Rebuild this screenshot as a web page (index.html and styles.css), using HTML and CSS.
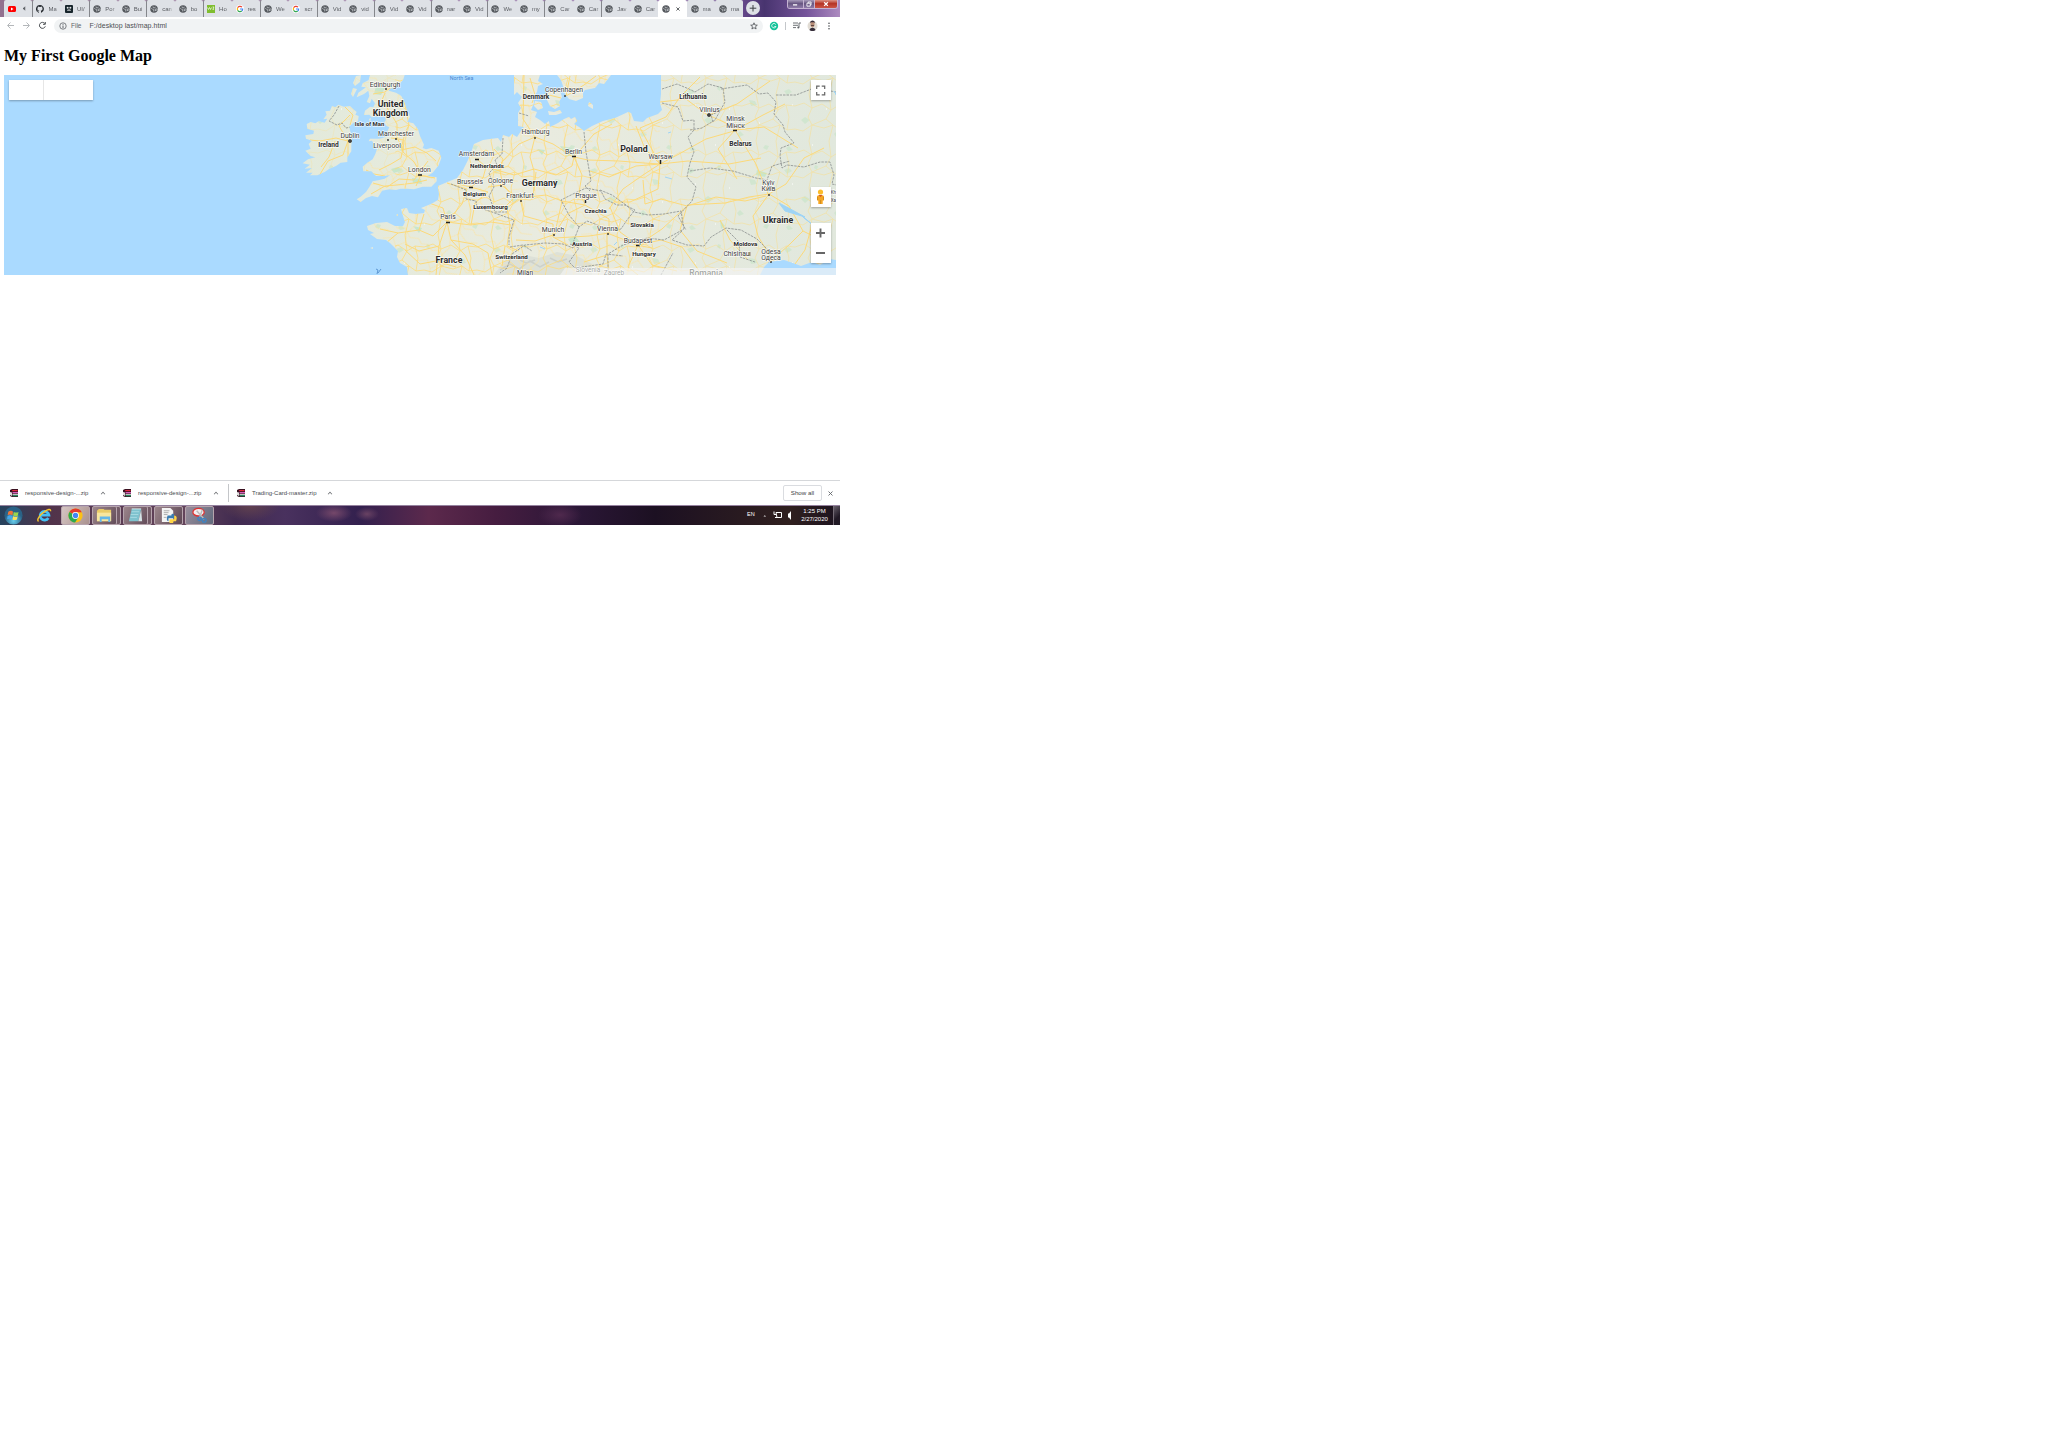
FILE: index.html
```html
<!DOCTYPE html>
<html lang="en">
<head>
<meta charset="utf-8">
<title>My First Google Map</title>
<link rel="stylesheet" href="styles.css">
</head>
<body>
<svg class="defs" width="0" height="0" aria-hidden="true">
  <symbol id="globe" viewBox="0 0 16 16"><circle cx="8" cy="8" r="7.500" fill="#54585d"/><path d="M2 5.500l3.500 3.500 2 .5v3.500M6 3l.5 2.500L9 6l2-2.500M10 9l3-1.500 1 1.500-3 3z" fill="none" stroke="#dfe2e7" stroke-width="1.300"/></symbol>
  <symbol id="google" viewBox="0 0 16 16"><circle cx="8" cy="8" r="8" fill="#fff"/><g fill="none" stroke-width="2.400"><path d="M12 4.300A5.400 5.400 0 0 0 3.300 5.600" stroke="#ea4335"/><path d="M3.300 5.600a5.400 5.400 0 0 0 0 4.800" stroke="#fbbc05"/><path d="M3.300 10.400a5.400 5.400 0 0 0 8.200 1.700" stroke="#34a853"/><path d="M11.500 12.100A5.400 5.400 0 0 0 13.300 8H8" stroke="#4285f4"/></g></symbol>
  <symbol id="zip" viewBox="0 0 9 9"><path d="M0 1l2-1h6v8H2L0 7z" fill="#3a1020"/><path d="M0 3l2 .6V7L0 6z" fill="#ddd"/><path d="M2.200 1.600h5.400" stroke="#e0263c" stroke-width="1.200"/><path d="M2.500 3.600H8" stroke="#d65cc0" stroke-width="1.200"/><path d="M2.500 5.300H8" stroke="#fff" stroke-width=".9"/><path d="M2.500 6.700H8" stroke="#25a36d" stroke-width="1.100"/></symbol>
</svg>

<main class="screen">
  <header class="tabstrip">
    <div class="tab"><svg class="fav" viewBox="0 0 16 16"><rect y="2" width="16" height="12" rx="3" fill="#f00"/><path d="M6 5l5 3-5 3z" fill="#fff"/></svg><svg class="speaker" viewBox="0 0 4 6"><path d="M0 2h1l2-2v6L1 4H0z" fill="#5f6368"/></svg></div>
    <div class="tab sep"><svg class="fav" viewBox="0 0 16 16"><path fill="#24292e" d="M8 0a8 8 0 0 0-2.500 15.600c.4 0 .5-.2.5-.4v-1.500c-2.200.5-2.700-1-2.700-1-.4-.9-.9-1.200-.9-1.200-.7-.5.1-.5.1-.5.8.1 1.200.8 1.200.8.7 1.300 1.900.9 2.300.7.1-.5.3-.9.500-1.100-1.800-.2-3.600-.9-3.600-4 0-.9.3-1.600.8-2.200 0-.2-.3-1 .1-2.100 0 0 .7-.2 2.200.8a8 8 0 0 1 4 0c1.500-1 2.200-.8 2.200-.8.4 1.100.1 1.900.1 2.100.5.600.8 1.300.8 2.200 0 3.100-1.900 3.800-3.700 4 .3.3.6.8.6 1.500v2.200c0 .2.1.5.5.4A8 8 0 0 0 8 0z"/></svg><span>Ma</span></div>
    <div class="tab"><svg class="fav" viewBox="0 0 16 16"><rect width="16" height="16" rx="2" fill="#17252c"/><path d="M4 4.500h2.500v2H4zM9.500 4.500H12v2H9.500zM4 11c2-2 6-2 8 0" fill="#fff" stroke="#fff"/></svg><span>UI/</span></div>
    <div class="tab sep"><svg class="fav"><use href="#globe"/></svg><span>Por</span></div>
    <div class="tab"><svg class="fav"><use href="#globe"/></svg><span>Bui</span></div>
    <div class="tab sep"><svg class="fav"><use href="#globe"/></svg><span>can</span></div>
    <div class="tab"><svg class="fav"><use href="#globe"/></svg><span>bo</span></div>
    <div class="tab sep"><svg class="fav" viewBox="0 0 16 16"><path d="M0 0h16v16H0z" fill="#7fbd2f"/><path d="M1 5l2 4 2-4 2 4 2-4M11 4h3l-2 3c3 0 2 3-1 2" fill="none" stroke="#fff" stroke-width="1.300"/></svg><span>Ho</span></div>
    <div class="tab"><svg class="fav"><use href="#google"/></svg><span>res</span></div>
    <div class="tab sep"><svg class="fav"><use href="#globe"/></svg><span>We</span></div>
    <div class="tab"><svg class="fav"><use href="#google"/></svg><span>scr</span></div>
    <div class="tab sep"><svg class="fav"><use href="#globe"/></svg><span>Vid</span></div>
    <div class="tab"><svg class="fav"><use href="#globe"/></svg><span>vid</span></div>
    <div class="tab sep"><svg class="fav"><use href="#globe"/></svg><span>Vid</span></div>
    <div class="tab"><svg class="fav"><use href="#globe"/></svg><span>Vid</span></div>
    <div class="tab sep"><svg class="fav"><use href="#globe"/></svg><span>nar</span></div>
    <div class="tab"><svg class="fav"><use href="#globe"/></svg><span>Vid</span></div>
    <div class="tab sep"><svg class="fav"><use href="#globe"/></svg><span>We</span></div>
    <div class="tab"><svg class="fav"><use href="#globe"/></svg><span>my</span></div>
    <div class="tab sep"><svg class="fav"><use href="#globe"/></svg><span>Car</span></div>
    <div class="tab"><svg class="fav"><use href="#globe"/></svg><span>Car</span></div>
    <div class="tab sep"><svg class="fav"><use href="#globe"/></svg><span>Jav</span></div>
    <div class="tab"><svg class="fav"><use href="#globe"/></svg><span>Car</span></div>
    <div class="tab active"><svg class="fav"><use href="#globe"/></svg><svg class="x" viewBox="0 0 5 5"><path d="M.5.5l4 4M4.500.5l-4 4" stroke="#3c4043"/></svg></div>
    <div class="tab"><svg class="fav"><use href="#globe"/></svg><span>ma</span></div>
    <div class="tab"><svg class="fav"><use href="#globe"/></svg><span>ma</span></div>
    <div class="newtab"><svg viewBox="0 0 14 14"><path d="M7 4v6.500M3.700 7.200h6.600" stroke="#3c4043" stroke-width="1"/></svg></div>
    <div class="winctl">
      <i><svg viewBox="0 0 18 9"><path d="M6 5h5" stroke="#fff" stroke-width="1.600"/></svg></i>
      <i><svg viewBox="0 0 12 9"><path d="M3.500 3h4v3.500h-4zM5 3V1.500h3.500V5H7.500" fill="none" stroke="#fff"/></svg></i>
      <i class="close"><svg viewBox="0 0 24 9"><path d="M10 2l4 4M14 2l-4 4" stroke="#fff" stroke-width="1.400"/></svg></i>
    </div>
  </header>

  <nav class="toolbar">
    <svg class="navs" viewBox="0 0 54 18" fill="none"><path d="M14 8.500H8M10.500 5.500l-3 3 3 3M23 8.500h6M26.500 5.500l3 3-3 3" stroke="#b4b7ba"/><path d="M44.800 6.500a3 3 0 1 0 .5 2.800M45.300 5v2.300H43" stroke="#4b4f53" stroke-width="1"/></svg>
    <div class="omnibox">
      <svg class="info" viewBox="0 0 8 8"><circle cx="4" cy="4" r="3.200" fill="none" stroke="#5f6368" stroke-width=".8"/><path d="M4 1.900v.9M4 3.500v2.600" stroke="#5f6368"/></svg>
      <span class="file">File</span><span class="url">F:/desktop last/map.html</span>
      <svg class="star" viewBox="0 0 8 8"><path d="M4 .8l.9 2.200 2.400.2-1.800 1.500.6 2.300L4 5.700 1.900 7l.6-2.300L.7 3.200l2.400-.2z" fill="none" stroke="#4b4f53" stroke-width=".8"/></svg>
    </div>
    <svg class="ext" viewBox="763 17 77 18" fill="none"><circle cx="774" cy="26" r="4.200" fill="#15c39a"/><path d="M775.800 24.500a2.200 2.200 0 1 0 .2 2h-1.700" stroke="#fff" stroke-width=".8"/><path d="M785.500 22v8" stroke="#c4c7ca"/><path d="M793 23h5M793 25.300h5M793 27.600h3M801 23h-2v4.500" stroke="#5f6368" stroke-width=".9"/><circle cx="798.300" cy="27.500" r="1" fill="#5f6368"/><circle cx="812.500" cy="26" r="5" fill="#e1dcd4"/><path d="M810.500 22.500c0-2 4-2 4 0v3c-1 2.500-3 2.500-4 0z" fill="#b98e78"/><path d="M810 23c0-3.500 5-3.500 5 0l-1-.8h-3zM809.500 30c1-3 5-3 6 0-1 1.300-5 1.300-6 0z" fill="#342c38"/><path d="M811 25.500h3" stroke="#3a2a2a" stroke-width=".7"/><g fill="#4b4f53"><circle cx="829" cy="23.200" r=".8"/><circle cx="829" cy="26" r=".8"/><circle cx="829" cy="28.800" r=".8"/></g></svg>
  </nav>

  <section class="page">
    <h1>My First Google Map</h1>
    <div class="map">
      <svg class="geo" viewBox="4 75 832 200">
        <defs>
          <pattern id="minor" width="53" height="47" patternUnits="userSpaceOnUse"><path d="M0 12l9-3 8 5 10-4 9 6 8-5 9 1M0 35l8 2 9-6 12 3 9-3 7 5 8-1M14 0l3 14-4 9 4 8-3 16M34 0l2 16-5 9 7 6-4 16M17 31l14-6M44 11l3 12-2 13" fill="none" stroke="#fddb78" stroke-width=".75"/></pattern>
          <pattern id="fine" width="41" height="37" patternUnits="userSpaceOnUse" patternTransform="rotate(33)"><path d="M0 9l7 3 6-5 9 6 8-4 5 3 6-3M20 0l-3 11 4 8-6 9 5 9M21 19l10 4 10-5M0 28l8-6 7 6" fill="none" stroke="#fde39a" stroke-width=".6"/></pattern>
          <pattern id="green" width="97" height="79" patternUnits="userSpaceOnUse"><path d="M8 12l5-2 3 3-5 3zM39 7l3 1-1 4-3-2zM70 21l6 1 2 4-6 1zM25 41l4-3 5 3-5 4zM58 55l3-3 4 4-5 2zM86 66l4 1-2 4-4-2zM10 69l3-2 4 4-5 1z" fill="#cbe6cb" opacity=".7"/><path d="M50 30h1M16 26h1M80 44h1M36 66h1" stroke="#fff"/></pattern>
          <clipPath id="land">
            <path d="M408 275L407 267 400 263 397 257 398 251 390 243 386 240 377 239 370 234 374 233 368 230 367 226 376 223 387 222 395 226 403 226 405 222 403 216 401 209 407 208 409 213 416 214 424 213 425 210 421 208 431 204 438 200 439 194 438 186 445 183 457 178 463 170 468 160 472 150 474 144 483 140 490 139 498 138 501 142 503 135 509 137 512 134 517 137 521 131 524 127 518 126 518 113 521 108 518 103 522 97 517 92 514 95V75H540L538 81 543 84 538 86 537 92 533 97 534 103 531 110 537 112 535 117 540 120 545 124 549 121 550 127 558 123 564 119 569 117 571 119 575 117 577 121 574 124 579 127 584 131 592 126 603 121 615 118 628 112 631 113 634 121 643 122 647 118 658 114 662 110 660 103 661 94 661 75H836V260L830 259 820 265 812 262 801 266 793 263 784 260 776 261 769 262 764 267 760 275Z"/>
            <path transform="translate(290 70) scale(.33333)" d="M225 15L240 15 236 30 218 40 214 50 228 52 205 68 200 82 222 72 235 62 238 78 230 96 240 100 245 86 255 100 250 112 240 110 225 122 222 135 238 134 246 142 262 138 285 140 288 150 282 158 290 168 298 172 292 184 296 196 284 202 270 206 240 206 236 214 246 212 252 222 250 232 262 234 256 252 248 268 232 278 218 290 220 304 244 304 258 318 278 318 300 316 284 326 268 330 248 334 240 348 228 366 212 380 200 388 212 396 228 384 246 378 264 382 276 362 298 358 318 360 332 356 352 356 372 358 398 350 424 350 440 334 440 322 412 318 428 308 446 286 454 264 446 242 424 234 408 238 398 234 402 224 390 198 384 178 370 160 352 156 360 140 350 120 344 98 334 78 318 68 296 62 300 56 316 50 328 44 340 28 344 15Z"/>
            <path transform="translate(290 70) scale(.33333)" d="M145 104L162 110 180 108 190 118 200 126 196 134 206 138 204 154 190 158 178 170 182 190 186 204 184 226 184 244 172 262 172 276 152 278 138 288 118 296 104 306 82 316 60 316 68 308 48 308 66 294 44 296 60 284 38 280 54 268 76 262 62 258 46 242 62 236 56 222 66 212 48 206 46 196 70 192 72 182 52 176 50 162 62 156 76 160 86 154 104 158 112 146 100 148 110 134 106 124 120 122 126 108 136 112Z"/>
            <path d="M557 75L561 80 563 86 565 94 569 99 576 101 583 98 583 92 585 90 595 88 599 83 604 84 608 79 611 75ZM547 93L553 89 560 91 562 97 559 102 560 106 555 109 550 106 547 100ZM535 101L541 102 543 108 538 110 534 106ZM548 111L554 112 560 110 562 113 556 115 549 115ZM589 102L593 105 593 109 588 106Z"/>
            <path d="M361 75L360 82 355 86 353 83 356 76ZM353 88L357 89 353 97 351 94ZM369 119L371 118 370 122ZM396 215L398 214V216ZM370 248L373 247V249Z"/>
          </clipPath>
          <linearGradient id="tint" x1="0" x2="1"><stop offset=".35" stop-color="#e3eadb"/><stop offset=".65" stop-color="#e9ebdf"/><stop offset="1" stop-color="#e1e8dd"/></linearGradient>
        </defs>
        <rect x="4" y="75" width="832" height="200" fill="#aadaff"/>
        <g clip-path="url(#land)">
          <rect x="4" y="75" width="832" height="200" fill="url(#tint)"/>
          <rect x="4" y="75" width="832" height="200" fill="url(#green)"/>
          <g fill="#c8e6cc"><path d="M376 86l9 2-4 7-7-1zM391 169l7-2 4 3-8 3zM412 178l9 1 1 5-9-1zM560 146l12 2 3 7-9 1zM720 220l5 6-4 3zM757 170l10 3-2 4-9-2zM413 226l9 2-3 5zM568 239l7-3 5 6-8 3zM684 91l5 3-4 3zM537 149l8 1-3 5z"/></g>
          <path d="M494 275l10-14 15-7 20 4 18-6 20 4 15 8 0 11z" fill="#dde1d8"/><path d="M500 270l10-6 9 5 11-8 10 6 9-5M520 260l6 3 9-3M550 258l8 4 9-3" stroke="#cdd1ca" stroke-width="1.500" fill="none"/>
          <rect x="360" y="75" width="300" height="200" fill="url(#fine)"/>
          <rect x="395" y="75" width="265" height="200" fill="url(#minor)"/>
          <rect x="290" y="75" width="105" height="110" fill="url(#minor)" opacity=".3"/>
          <rect x="660" y="75" width="176" height="200" fill="url(#minor)" opacity=".55"/>
          <g class="roads">
            <path d="M373 94l12-2 5-4 8 1M385 93l-3 7 9 14 6 10 0 14 6 10-2 10-10 6-12 6M402 95l4 14 3 16 -4 8-4 16M391 138l13 2-1 12 11 10 6 10-6 8-15-1-12 8-14-4M401 150l14-3 12 6 9 8M366 170l8 4 11 2M371 194l14-8 12-1 17-2 13-3M419 175l16 3M419 173l9-12M420 177l-4 9"/>
            <path d="M348 141l-12-3-16 3-10-1M348 141l-5 14-15 6-9 15M348 141l-9-15 11-11M348 141v16M345 107l8 8-3 10M335 141l-6 16-8 10"/>
            <path d="M447 222l-4-14-14-5-16 8M447 222l15-18 5-15-20-6M447 222l-14 14-14-6-21 3-18-4M447 222l24 3 20-3 20 3M447 222l4 18 14 15 9 20M447 222l-8 24-20 5-14-7M439 246l-3 29M451 240l22 4 15 9 4 22M471 225l4-22 13-11-17-5M398 233l-12 10M405 250l15 14 16-3 20 6M419 230l5-16"/>
            <path d="M477 159l9 8-3 11-12 9-14-3M486 167l14 4 3-12-9-10M500 171l3 14-15 2M500 171l14 4 20-6 22 6 16-9 2-9M500 184l18 14 15-1 3-25M520 198l4 18 29 8 0 13 15 8M520 198l-13 10 3 18-3 20 12 5M553 235l-18 6-19-1M535 137l-5 20 4 14 0 20M535 137l18 7 20 13M535 137l-16 7-18 19M574 157l8 18-3 17 6 12M574 157l14 3 31 1 25 2 16 1M574 157l20-23 18-10M535 137l-12-18 1-44M520 198l26-3 16 6 23 4M562 201l-6 27M585 205l24 14 0 14-20 3-34 2M585 205l-18 9-13 21M607 233l18 7 11 5 16 3M607 233l0 22-23 7M607 255l2 18M505 246l-3 20M502 183l12 15-14 14"/>
            <path d="M660 164l-15-15-9-23M660 164l-24 2-27 11-19-6M660 164l-17 11-20 14-14 20M660 164l-2 25-28 13-16 0M643 180l2 24 16-5 26 7M687 206l29-9 29 4 21-5M660 164l19-10 27-15 28-8 29-16 22-11M660 164l28-3 41 3 32-6M660 164l-20-36 26-11M706 114l-20-15-26 3M706 114l20 9 9 7M709 115l28-11 33-23M735 130l29-3 34 21M735 130l-17 19 19 30M735 130l21 34 12 30M769 194l-20 3-24 6-38 2M769 194l17-10 18-26 20-10M769 194l20 12 14 25 18 9M769 194l-16 22 5 20 13 22M687 206l-7 24 17 21 30 12M638 245l23-5 21 7 18 25M638 245l-10 22 10 8M638 245l-18-13-10-25M638 245l14 20 25 6M687 206l-25 23-24 16M770 262l20-18 13-13M720 220l10 20 18 20M812 225l-7 25-10 14M700 77l-20 20-14 20M570 76l-4 20 18-11 12-9M530 78l5 17-3 8M549 95l12 3"/>
          </g>
          <g class="borders"><path d="M339 106l-5 9-5 6 8 4 5-2 4 5 5-1M503 138l-1 16-7 6 2 5-8 8 5 14-5 9 6 16 12 0M451 184l15 6 0 9 10 2 1 6 15 5 22 8-5 17 0 8M519 113l10 3M584 132l2 20 5 29-6 5 5 5M579 227l-10-12-8-15 12-6 13-6 15 3 4 8 12 6 8 0 10 5-8 10-6 9-12 2-14-7-8-3zM579 227l-5 13-1 8-10-4-18-1-20 2-13 9-5 14-7 5M510 247l13-2 9 6M570 244l9 4-10 14 6 6 28-4 3-10 17 2M600 190l12 5 14 10 8 7 14 3 16-1 17-3 3 18-20 11-17-2-24 7-15 9 0 20M682 231l-10 9 15 5 17 1 7-9 15-9 15 2 16 9 12 12 0 12-5 7M727 230l12 12 1 15 15 5M662 103l16 4 5 14 11-1 0 10-6 7 6 15-4 11-3 14 9 10-4 14-14 15 8 14M662 89l15-5 12 5 6 3 13-8 15 4 2 14-10 18-13 8-12 2M721 89l26-4 12 9 9-1 8 9-2 12 9 11 2 7 9 11-13 5-1 8 2 12 5-3 17 2 16-5 10 0 4 13-2 9 13 3 11 3M690 171l20-3 23 3 23 7 11 2 5-14 18-5M776 95l20 0 18-7 22 4M713 122l-2-7 9-4M661 275l12-22"/></g>
          <g fill="#9fd4f5" stroke="#9fd4f5" stroke-width="1"><path d="M779 203l6 8 20 6-11-6zM801 215l12 10-9-7zM834 91l3 5z"/><path d="M522 259l4-1M540 247l5 2M589 245l4 2M614 245l3-3M770 182l-1 10M668 133l3-1M665 177l7 2" fill="none"/></g>
        </g>
        <path d="M560 275l5-7h271v7z" fill="#f5f5f5" opacity=".65"/>
        <g class="marks"><circle cx="350" cy="141" r="1.600"/><circle cx="709" cy="115" r="1.600"/><path d="M418 175h4M446 222.500h4M475 159.500h4M469 187.500h4M572 156.500h4M733 130.500h4M636 245.500h4"/><path d="M660.500 160v4M585.500 200v3M749.500 252v4" stroke-width="1.500"/></g>
        <g class="dots"><path d="M385 88l2 2m0-2l-2 2M387 139l2 2m0-2l-2 2M395 138l2 2m0-2l-2 2M564 95l2 2m0-2l-2 2M534 137l2 2m0-2l-2 2M500 185l2 2m0-2l-2 2M520 200l2 2m0-2l-2 2M553 234l2 2m0-2l-2 2M607 233l2 2m0-2l-2 2M768 194l2 2m0-2l-2 2M770 261l2 2m0-2l-2 2"/></g>
        <g class="big"><text x="390.500" y="107">United</text><text x="390.500" y="116">Kingdom</text><text x="449" y="263.200">France</text><text x="539.500" y="185.700">Germany</text><text x="634" y="152.300">Poland</text><text x="778" y="222.700">Ukraine</text></g>
        <g class="mid"><text x="328.500" y="147" class="irl">Ireland</text><text x="369.500" y="126" class="tiny">Isle of Man</text><text x="536" y="98.800" class="irl">Denmark</text><text x="487" y="168.300">Netherlands</text><text x="474.500" y="196">Belgium</text><text x="490.500" y="209">Luxembourg</text><text x="511.500" y="259.300">Switzerland</text><text x="582" y="246.300">Austria</text><text x="595.500" y="213.300">Czechia</text><text x="642" y="227.300">Slovakia</text><text x="644" y="255.800">Hungary</text><text x="693" y="98.800" class="irl">Lithuania</text><text x="740.500" y="146" class="irl">Belarus</text><text x="745.500" y="245.800">Moldova</text></g>
        <g class="city"><text x="385" y="86.500">Edinburgh</text><text x="350" y="137.500">Dublin</text><text x="396" y="135.500">Manchester</text><text x="387" y="147.500">Liverpool</text><text x="419.500" y="172">London</text><text x="448" y="219">Paris</text><text x="476.500" y="156">Amsterdam</text><text x="470" y="184">Brussels</text><text x="500.500" y="182.700">Cologne</text><text x="520" y="197.800">Frankfurt</text><text x="535.500" y="134">Hamburg</text><text x="564" y="92.200">Copenhagen</text><text x="573.500" y="153.500">Berlin</text><text x="586" y="198.200">Prague</text><text x="553" y="232">Munich</text><text x="607.500" y="230.700">Vienna</text><text x="638" y="242.700">Budapest</text><text x="660.500" y="159">Warsaw</text><text x="709.500" y="112.200">Vilnius</text><text x="735.500" y="121.200">Minsk</text><text x="735.500" y="127.800">Мінск</text><text x="768.500" y="185">Kyiv</text><text x="768.500" y="191.200">Київ</text><text x="736.500" y="256.200">Chisinau</text><text x="771" y="254">Odesa</text><text x="771" y="260.200">Одеса</text></g>
        <g class="edge"><text x="836" y="194">Kh</text><text x="836" y="202">Ха</text></g>
        <g class="fade"><text x="525" y="275.200" class="solid">Milan</text><text x="588" y="272.300">Slovenia</text><text x="614" y="274.500">Zagreb</text><text x="706" y="275.500" class="rom">Romania</text></g>
        <text x="461.500" y="79.800" class="sea">North Sea</text>
        <path d="M376 269l2 1-1 4M378 273l3-4" stroke="#4a86c8" stroke-width=".8" fill="none"/>
      </svg>
      <div class="maptype"><i></i><i></i></div>
      <div class="ctl full"><svg viewBox="0 0 20 20"><path d="M5.700 9V6.200h3M10.700 6.200h3V9M13.700 12v2.800h-3M8.700 14.800h-3V12" fill="none" stroke="#666" stroke-width="1.200"/></svg></div>
      <div class="ctl peg"><svg viewBox="0 0 20 20"><path d="M6 9.500c0-2 7-2 7 0v4h-1.300V17H7.300v-3.500H6z" fill="#f5a623"/><circle cx="9.500" cy="5" r="2.600" fill="#fbbc2c"/><path d="M7.500 8h4l-2 2z" fill="#d3542d"/><path d="M9.500 13v4M6.500 10v3M12.500 10v3" stroke="#c9861d" stroke-width=".8"/></svg></div>
      <div class="ctl zoom"><svg viewBox="0 0 20 40"><path d="M5 10h9M9.500 5.500v9M5 30h9" stroke="#666" stroke-width="1.900"/></svg></div>
    </div>
  </section>

  <div class="downloads">
    <div class="dl"><svg><use href="#zip"/></svg><span>responsive-design-...zip</span><b></b></div>
    <div class="dl two"><svg><use href="#zip"/></svg><span>responsive-design-...zip</span><b></b></div>
    <div class="dl three"><svg><use href="#zip"/></svg><span>Trading-Card-master.zip</span><b></b></div>
    <button>Show all</button>
    <svg class="closebar" viewBox="0 0 5 5"><path d="M.5.5l4 4M4.500.5l-4 4" stroke="#5f6368" stroke-width=".9"/></svg>
  </div>

  <footer class="taskbar">
    <svg class="start" viewBox="0 0 20 20"><defs><radialGradient id="orb" cy=".8"><stop stop-color="#67cdec"/><stop offset="1" stop-color="#2a6286"/></radialGradient></defs><circle cx="10" cy="10" r="9.500" fill="url(#orb)"/><path d="M4.500 6q3-2 5 0l-.6 3.800q-2.500-1.500-5-.3z" fill="#f37535"/><path d="M10.300 6.200q2.500 1.300 5 0l-.8 4q-2.500 1-4.800-.3z" fill="#9bd54b"/><path d="M3.800 10.400q2.500-1.300 5 0L8 14q-2.300-1.300-4.700 0z" fill="#45a7ed"/><path d="M9.600 10.700q2.500 1.200 4.800 0l-.8 3.500q-2.300 1.200-4.700 0z" fill="#ffe25b"/></svg>
    <svg class="ie" viewBox="0 0 20 20"><path d="M14.500 13a5.200 5.200 0 1 1 .7-3.500H6" fill="none" stroke="#45c0f4" stroke-width="3.200"/><path d="M3 17c-3-2 2-8 7-11.500C14 2.500 18 2 17 5" fill="none" stroke="#f6c52c" stroke-width="1.700"/></svg>
    <div class="task lit"><svg viewBox="0 0 18 18"><circle cx="9" cy="9" r="7.500" fill="#fbc116"/><path d="M9 9L2.500 5.300A7.500 7.500 0 0 1 15.600 5.500H9z" fill="#e33b2e"/><path d="M9 9L2.500 5.300A7.500 7.500 0 0 0 8.500 16.500L12 11z" fill="#2da94f"/><circle cx="9" cy="9" r="3.600" fill="#fff"/><circle cx="9" cy="9" r="2.800" fill="#4285f4"/></svg></div>
    <div class="task stack exp"><svg viewBox="0 0 18 18"><path d="M1 4l2-2h5l1 1h7v12H1z" fill="#eacb66"/><path d="M1 6h15v9H1z" fill="#f8e69e"/><path d="M4 16v-6h11v6h-2v-3H6v3z" fill="#65b6e7"/></svg></div>
    <div class="task stack note"><svg viewBox="0 0 18 18"><path d="M5 2h10l-3 13H2z" fill="#7ec2ce"/><path d="M15 3l1 12-4 0z" fill="#d6e4e7"/><path d="M5 2h10" stroke="#d7ecee"/><path d="M5 5l8 0M4 8h8M3.500 11h7" stroke="#a9dbe2"/></svg></div>
    <div class="task py"><svg viewBox="0 0 18 18"><path d="M2 1h9l3 3v12H2z" fill="#f4f4f4"/><path d="M4 4h6M4 6h5M4 8h4M4 11h3" stroke="#999" stroke-width=".8"/><path d="M8 9h4q0-3 3-1v4H9v3q-3 0-1-6z" fill="#397bb0"/><path d="M10 17v-4h5v-4q4 0 2 6h-3v2z" fill="#ffd445"/></svg></div>
    <div class="task snip"><svg viewBox="0 0 18 18"><ellipse cx="8" cy="5.500" rx="6" ry="4" fill="#f3eeee" stroke="#d33" stroke-width="1.400"/><path d="M6 4l8 9M12 3L9 11" stroke="#bbb" stroke-width="1.500"/><circle cx="9" cy="12.500" r="1.800" fill="none" stroke="#3c83c4" stroke-width="1.400"/><circle cx="14" cy="14" r="2" fill="none" stroke="#3c83c4" stroke-width="1.400"/></svg></div>
    <div class="tray"><span>EN</span><svg viewBox="0 0 33 12"><path d="M.5 7.500l1.300-1.200 1.300 1.200z" fill="#eee"/><path d="M13 3.500h5.500v5H14zM12 8.500h5M11 2.500v3h2" fill="none" stroke="#fff"/><path d="M25 4.500h1l2-2.500v9L26 8.500h-1z" fill="#fff"/></svg></div>
    <div class="clock"><span>1:25 PM</span><span>2/27/2020</span></div>
    <div class="peek"></div>
  </footer>
</main>
</body>
</html>
```
FILE: styles.css
```css
* { box-sizing: border-box; }
body { margin: 0; background: #fff; }
.defs { display: block; position: absolute; }
.screen { width: 840px; height: 525px; display: flex; flex-direction: column; overflow: hidden; font-family: "Liberation Sans", sans-serif; }
svg { display: block; flex: none; }

.tabstrip { height: 17px; flex: none; display: flex; padding-left: 4px; background: linear-gradient(90deg, #92718f, #9873a0 45%, #8b64a3 75%, #6a4a8e 88%, #48346f 91%, #75549a 96%, #ad8bc0); }
.tab { width: 28.440px; height: 17px; flex: none; display: flex; align-items: center; gap: 4px; padding-left: 4px; overflow: hidden; background: #dee1e6; border-radius: 2px 2px 0 0; }
.tab.sep { border-left: 1px solid #85878c; padding-left: 3px; }
.tab.active { background: #fff; gap: 6px; }
.tab span { font-size: 6px; line-height: 8px; width: 11px; overflow: hidden; color: #595c61; -webkit-mask-image: linear-gradient(90deg, #000 65%, transparent); }
.fav { width: 8px; height: 8px; }
.tab:first-child { gap: 7px; }
.speaker { width: 3px; height: 5px; }
.x { width: 4px; height: 4px; }
.newtab { width: 14px; height: 14px; margin: 1px 0 0 3px; flex: none; border-radius: 50%; background: #dee1e6; }
.newtab svg { width: 14px; height: 14px; }
.winctl { display: flex; margin-left: auto; margin-right: 2px; width: 51px; height: 9px; border: 1px solid #c5b3d2; border-top: 0; border-radius: 0 0 3px 3px; overflow: hidden; }
.winctl i { width: 16px; background: linear-gradient(#a79bba, #675681 45%, #8f7ba9); border-right: 1px solid #c5b3d2; }
.winctl i:nth-child(2) { width: 11px; }
.winctl .close { flex: 1; border: 0; background: linear-gradient(#dc9386, #b53324 45%, #cc5647); }
.winctl svg { width: 100%; height: 9px; }

.toolbar { height: 18px; flex: none; display: flex; align-items: center; background: #fff; }
.navs { width: 54px; height: 18px; }
.omnibox { width: 709px; height: 14px; border-radius: 7px; background: #f1f3f4; display: flex; align-items: center; padding: 0 5px; font-size: 6.500px; line-height: 8px; }
.info { width: 8px; height: 8px; margin-right: 4px; }
.file { color: #5f6368; width: 18.500px; }
.url { color: #4b4e52; font-size: 7px; flex: 1; white-space: pre; letter-spacing: .05px; }
.star { width: 8px; height: 8px; }
.ext { width: 77px; height: 18px; }

.page { height: 445px; flex: none; padding: 12px 4px 0; background: #fff; }
h1 { margin: 0; height: 28px; font: bold 16px/18px "Liberation Serif", serif; color: #000; white-space: nowrap; }
.map { position: relative; width: 832px; height: 200px; overflow: hidden; }
.geo { width: 832px; height: 200px; font-family: Roboto, sans-serif; }
.roads { fill: none; stroke: #fcd979; stroke-width: 1; stroke-linejoin: round; }
.borders { fill: none; stroke: #949996; stroke-width: .9; stroke-dasharray: 2.500 1; }
.marks { fill: #444; stroke: #222; stroke-width: 1.600; }
.marks circle { stroke-width: .6; }
.dots { fill: none; stroke: #333; stroke-width: .7; }
.geo text { text-anchor: middle; paint-order: stroke; stroke: #fff; stroke-width: 1.300px; stroke-opacity: .8; stroke-linejoin: round; fill: #2b2b2b; }
.geo .big text { font-size: 8.800px; font-weight: 700; }
.geo .mid text { font-size: 6.200px; font-weight: 700; }
.geo .mid .irl { font-size: 6.600px; }
.geo .mid .tiny { font-size: 5.900px; }
.geo .city text { font-size: 6.800px; fill: #3c3c3c; }
.geo .edge text { font-size: 4.500px; text-anchor: end; fill: #444; }
.geo .fade text { font-size: 6.500px; fill: #a6aaa6; }
.geo .fade .solid { fill: #333; }
.geo .fade .rom { font-size: 8.500px; font-weight: 500; }
.geo .sea { font-size: 5.300px; fill: #4a86cf; stroke: none; }
.maptype { position: absolute; left: 5px; top: 5px; width: 84px; height: 20px; display: flex; background: #fff; box-shadow: 0 1px 2px rgba(0,0,0,.3); }
.maptype i { width: 35px; border-right: 1px solid #e6e6e6; }
.maptype i + i { border: 0; }
.ctl { position: absolute; left: 807px; width: 20px; height: 20px; background: #fff; box-shadow: 0 1px 2px rgba(0,0,0,.3); }
.ctl svg { width: 100%; height: 100%; }
.full { top: 5px; }
.peg { top: 112px; }
.zoom { top: 148px; height: 40px; }

.downloads { height: 25px; flex: none; display: flex; align-items: center; border-top: 1px solid #d5d7da; background: #fff; }
.dl { width: 113px; height: 18px; display: flex; align-items: center; padding-left: 10px; font-size: 6px; line-height: 8px; color: #494c50; }
.dl svg { width: 9px; height: 9px; margin-right: 6px; }
.dl span { width: 76px; white-space: nowrap; }
.dl b { width: 4px; height: 4px; border: solid #6b6e72; border-width: 1px 0 0 1px; transform: translateY(1px) rotate(45deg) scale(.8); }
.dl.two { border-right: 1px solid #c4c6c9; width: 116px; }
.dl.three { padding-left: 8px; }
.downloads button { width: 39px; height: 16px; margin: 0 6px 0 auto; padding: 0; border: 1px solid #dadce0; border-radius: 2px; background: #fff; color: #3e4145; font: 6.200px/8px "Liberation Sans", sans-serif; }
.closebar { width: 5px; height: 5px; margin-right: 7px; }

.taskbar { height: 20px; flex: none; display: flex; align-items: center; box-shadow: inset 0 1px #95829f; background: radial-gradient(ellipse 18px 9px at 334px 8px, #75486a, transparent), radial-gradient(ellipse 12px 7px at 367px 9px, #694263, transparent), radial-gradient(ellipse 30px 16px at 250px 0, #62424f, transparent), radial-gradient(ellipse 22px 12px at 560px 10px, #4f294d, transparent), linear-gradient(90deg, #26425d, #51334a 6%, #63445b 22%, #412b50 28%, #49315e 34%, #33204e 43%, #5c294c 51%, #461d40 59%, #2c1738 68%, #1c1022 78%, #30201f 94%, #1b121f); }
.start { width: 19px; height: 19px; margin-left: 4px; }
.ie { width: 17px; height: 17px; margin: 0 8px 0 13px; }
.task { width: 29px; height: 19px; flex: none; display: flex; align-items: center; justify-content: center; border: 1px solid #b6a4ad; border-radius: 2px; background: linear-gradient(120deg, #9b858b, #5d4654); margin-right: 2px; }
.task svg { width: 17px; height: 17px; }
.task.lit { background: linear-gradient(120deg, #d5c5c3, #aa928f); }
.task.stack { box-shadow: inset -3px 0 #735b67, inset -4px 0 #b6a4ad; padding-right: 4px; }
.task.snip { background: linear-gradient(120deg, #998d9b, #626b7e); }
.tray { margin-left: auto; display: flex; align-items: center; color: #fff; font-size: 5.500px; line-height: 8px; transform: translateX(-2px); }
.tray span { width: 16px; transform: translateY(-1px); }
.tray svg { width: 33px; height: 12px; }
.clock { width: 35px; display: flex; flex-direction: column; align-items: center; color: #fff; font-size: 6px; line-height: 8.500px; transform: translate(-1px, 0); }
.peek { width: 7px; height: 19px; border-left: 1px solid #746b75; background: linear-gradient(135deg, #665e69, #211925 60%); }
```
